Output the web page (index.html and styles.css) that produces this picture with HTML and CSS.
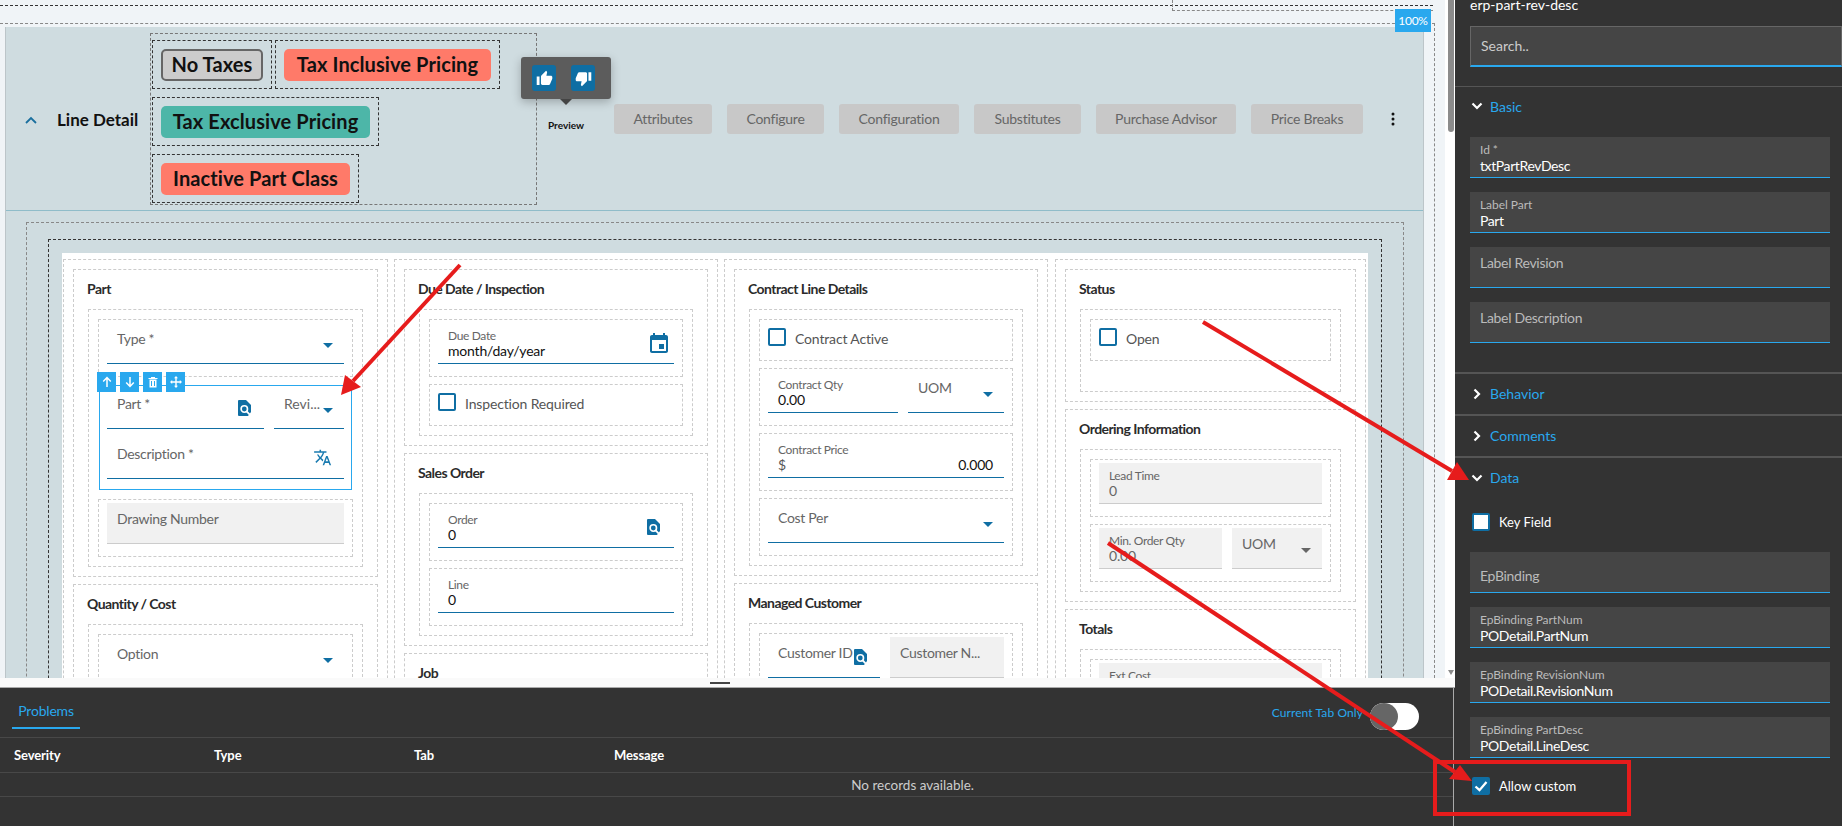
FILE: index.html
```html
<!DOCTYPE html>
<html lang="en">
<head>
<meta charset="utf-8">
<title>Line Detail designer</title>
<link rel="stylesheet" href="styles.css">
</head>
<body>
<svg class="defs" aria-hidden="true">
  <symbol id="i-search" viewBox="0 0 13 16"><path d="M0 1a1 1 0 0 1 1-1h7l5 5v10a1 1 0 0 1-1 1H1a1 1 0 0 1-1-1z" fill="#0f6ea3"/><path d="M13 12v4H10z" fill="#fff"/><circle cx="6.300" cy="9" r="3.200" fill="#0f6ea3" stroke="#fff" stroke-width="1.600"/><path d="M8.600 11.300 11.800 14.600" fill="none" stroke="#fff" stroke-width="1.800"/></symbol>
  <symbol id="i-cal" viewBox="2 0 20 22"><path d="M17 12h-5v5h5v-5zM16 1v2H8V1H6v2H5c-1.11 0-1.99.9-1.99 2L3 19c0 1.1.89 2 2 2h14c1.1 0 2-.9 2-2V5c0-1.1-.9-2-2-2h-1V1h-2zm3 18H5V8h14v11z"/></symbol>
  <symbol id="i-tr" viewBox="1 1 23 22"><path d="M12.87 15.07l-2.54-2.51.03-.03c1.74-1.94 2.98-4.17 3.71-6.53H17V4h-7V2H8v2H1v1.99h11.17C11.5 7.92 10.44 9.75 9 11.35 8.07 10.32 7.3 9.19 6.69 8h-2c.73 1.63 1.73 3.17 2.98 4.56l-5.09 5.02L4 19l5-5 3.11 3.11.76-2.04zM18.5 10h-2L12 22h2l1.12-3h4.75L21 22h2l-4.5-12zm-2.62 7l1.62-4.33L19.12 17h-3.24z"/></symbol>
  <symbol id="i-down" viewBox="0 0 12 8"><path d="M1.5 1.5 6 6l4.5-4.5" fill="none" stroke="currentColor" stroke-width="2.2"/></symbol>
  <symbol id="i-right" viewBox="0 0 8 12"><path d="M1.5 1.5 6 6l-4.5 4.5" fill="none" stroke="currentColor" stroke-width="2.2"/></symbol>
</svg>

<div class="main">
  <div class="canvas-wrap">
    <div class="canvas">
      <div class="top-line"></div>
      <div class="top-box"></div>
      <div class="zoom-badge">100%</div>
      <div class="body-dash">
        <section class="panel">
          <header class="panel-header">
            <svg class="collapse" viewBox="0 0 12 8"><path d="M1 7l5-5 5 5" fill="none" stroke="#1a6f9e" stroke-width="1.8"/></svg>
            <h1 class="panel-title">Line Detail</h1>
            <div class="chips">
              <div class="chip-box"><span class="chip chip-grey">No Taxes</span></div>
              <div class="chip-box"><span class="chip chip-red w207">Tax Inclusive Pricing</span></div>
              <div class="chip-box"><span class="chip chip-teal w209">Tax Exclusive Pricing</span></div>
              <div class="chip-box"><span class="chip chip-red w189">Inactive Part Class</span></div>
            </div>
            <div class="preview">
              <div class="vote">
                <span class="vote-btn"><svg viewBox="0 0 24 24"><path d="M1 21h4V9H1v12zm22-11c0-1.1-.9-2-2-2h-6.31l.95-4.57.03-.32c0-.41-.17-.79-.44-1.06L14.17 1 7.59 7.59C7.22 7.95 7 8.45 7 9v10c0 1.1.9 2 2 2h9c.83 0 1.54-.5 1.84-1.22l3.02-7.05c.09-.23.14-.47.14-.73v-2z"/></svg></span>
                <span class="vote-btn"><svg viewBox="0 0 24 24"><path d="M15 3H6c-.83 0-1.54.5-1.84 1.22l-3.02 7.05c-.09.23-.14.47-.14.73v2c0 1.1.9 2 2 2h6.31l-.95 4.57-.03.32c0 .41.17.79.44 1.06L9.83 23l6.59-6.59c.36-.36.58-.86.58-1.41V5c0-1.1-.9-2-2-2zm4 0v12h4V3h-4z"/></svg></span>
                <span class="vote-tip"></span>
              </div>
              <span class="preview-label">Preview</span>
            </div>
            <nav class="tabs">
              <span class="tab">Attributes</span>
              <span class="tab">Configure</span>
              <span class="tab">Configuration</span>
              <span class="tab">Substitutes</span>
              <span class="tab">Purchase Advisor</span>
              <span class="tab">Price Breaks</span>
            </nav>
            <svg class="kebab" viewBox="0 0 4 14"><circle cx="2" cy="2" r="1.5"/><circle cx="2" cy="7" r="1.5"/><circle cx="2" cy="12" r="1.5"/></svg>
          </header>

          <div class="panel-body">
            <div class="dash-a">
              <div class="dash-b">
                <div class="form">

                  <div class="col">
                    <div class="card">
                      <h2 class="card-title">Part</h2>
                      <div class="inner">
                        <div class="row">
                          <div class="field"><span class="ph">Type *</span><i class="arrow"></i></div>
                        </div>
                        <div class="selected">
                          <div class="toolbar">
                            <span class="tool"><svg viewBox="0 0 12 12"><path d="M6 11V2M2.2 5.5 6 1.6l3.8 3.9" fill="none" stroke="#fff" stroke-width="1.5"/></svg></span>
                            <span class="tool"><svg viewBox="0 0 12 12"><path d="M6 1v9M2.2 6.500 6 10.400l3.800-3.900" fill="none" stroke="#fff" stroke-width="1.500"/></svg></span>
                            <span class="tool"><svg viewBox="0 0 12 12"><path d="M1.500 2h9v1h-9zM4 1h4v1H4zM2.500 3.500h7V11.500h-7zM4 5v5h1V5zm3 0v5h1V5z" fill="#fff" fill-rule="evenodd"/></svg></span>
                            <span class="tool"><svg viewBox="0 0 12 12"><path d="M6 0 8 2.200H6.700V5.300H9.800V4L12 6 9.800 8V6.700H6.700V9.800H8L6 12 4 9.800H5.300V6.700H2.200V8L0 6 2.200 4V5.300H5.300V2.200H4z" fill="#fff"/></svg></span>
                          </div>
                          <div class="split">
                            <div class="field w157"><span class="ph">Part *</span><svg class="ic-search"><use href="#i-search"/></svg></div>
                            <div class="field fill"><span class="ph ph-rev">Revi...</span><i class="arrow"></i></div>
                          </div>
                          <div class="field"><span class="ph">Description *</span><svg class="ic-tr"><use href="#i-tr"/></svg></div>
                        </div>
                        <div class="row">
                          <div class="field off"><span class="ph">Drawing Number</span></div>
                        </div>
                      </div>
                    </div>
                    <div class="card">
                      <h2 class="card-title">Quantity / Cost</h2>
                      <div class="inner">
                        <div class="row">
                          <div class="field"><span class="ph">Option</span><i class="arrow"></i></div>
                        </div>
                      </div>
                    </div>
                  </div>

                  <div class="col">
                    <div class="card">
                      <h2 class="card-title">Due Date / Inspection</h2>
                      <div class="inner">
                        <div class="row">
                          <div class="field">
                            <div class="stack"><span class="lbl">Due Date</span><span class="val">month/day/year</span></div>
                            <svg class="ic-cal"><use href="#i-cal"/></svg>
                          </div>
                        </div>
                        <div class="row row-check"><span class="check"></span><span class="check-text">Inspection Required</span></div>
                      </div>
                    </div>
                    <div class="card">
                      <h2 class="card-title">Sales Order</h2>
                      <div class="inner">
                        <div class="row">
                          <div class="field">
                            <div class="stack"><span class="lbl">Order</span><span class="val">0</span></div>
                            <svg class="ic-search ic-search-order"><use href="#i-search"/></svg>
                          </div>
                        </div>
                        <div class="row">
                          <div class="field"><div class="stack"><span class="lbl">Line</span><span class="val">0</span></div></div>
                        </div>
                      </div>
                    </div>
                    <div class="card">
                      <h2 class="card-title">Job</h2>
                    </div>
                  </div>

                  <div class="col">
                    <div class="card">
                      <h2 class="card-title">Contract Line Details</h2>
                      <div class="inner">
                        <div class="row row-check"><span class="check"></span><span class="check-text">Contract Active</span></div>
                        <div class="row">
                          <div class="split">
                            <div class="field w130"><div class="stack"><span class="lbl">Contract Qty</span><span class="val">0.00</span></div></div>
                            <div class="field fill"><span class="ph">UOM</span><i class="arrow"></i></div>
                          </div>
                        </div>
                        <div class="row">
                          <div class="field">
                            <div class="stack"><span class="lbl">Contract Price</span>
                              <span class="val val-money"><span class="cur">$</span><span>0.000</span></span>
                            </div>
                          </div>
                        </div>
                        <div class="row">
                          <div class="field"><span class="ph">Cost Per</span><i class="arrow"></i></div>
                        </div>
                      </div>
                    </div>
                    <div class="card">
                      <h2 class="card-title">Managed Customer</h2>
                      <div class="inner">
                        <div class="row">
                          <div class="split">
                            <div class="field w112"><span class="ph">Customer ID</span><svg class="ic-search"><use href="#i-search"/></svg></div>
                            <div class="field fill off"><span class="ph ph-name">Customer N...</span></div>
                          </div>
                        </div>
                      </div>
                    </div>
                  </div>

                  <div class="col col-last">
                    <div class="card">
                      <h2 class="card-title">Status</h2>
                      <div class="inner inner-tall">
                        <div class="row row-check"><span class="check"></span><span class="check-text">Open</span></div>
                      </div>
                    </div>
                    <div class="card">
                      <h2 class="card-title">Ordering Information</h2>
                      <div class="inner">
                        <div class="row">
                          <div class="field off"><div class="stack"><span class="lbl">Lead Time</span><span class="val">0</span></div></div>
                        </div>
                        <div class="row">
                          <div class="split">
                            <div class="field off w123"><div class="stack"><span class="lbl">Min. Order Qty</span><span class="val">0.00</span></div></div>
                            <div class="field off fill"><span class="ph">UOM</span><i class="arrow"></i></div>
                          </div>
                        </div>
                      </div>
                    </div>
                    <div class="card">
                      <h2 class="card-title">Totals</h2>
                      <div class="inner">
                        <div class="row">
                          <div class="field off"><div class="stack"><span class="lbl">Ext Cost</span><span class="val">0.00</span></div></div>
                        </div>
                      </div>
                    </div>
                  </div>

                </div>
              </div>
            </div>
          </div>
        </section>
      </div>
    </div>
    <div class="gutter"><span class="thumb"></span><i class="gutter-arrow"></i></div>
  </div>
  <div class="splitter"><span class="handle"></span></div>

  <section class="problems">
    <div class="problems-top">
      <span class="problems-tab">Problems</span>
      <span class="current">Current Tab Only</span>
      <span class="toggle"><span class="knob"></span></span>
    </div>
    <div class="grid-head">
      <span>Severity</span><span>Type</span><span>Tab</span><span>Message</span>
    </div>
    <div class="grid-empty">No records available.</div>
  </section>
</div>

<aside class="props">
  <div class="props-title">erp-part-rev-desc</div>
  <div class="search-wrap"><div class="search">Search..</div></div>

  <div class="sec-head sec-head-first"><svg class="chev-d"><use href="#i-down"/></svg><span>Basic</span></div>
  <div class="sec-body">
    <div class="dfield"><span class="dlbl">Id *</span><span class="dval">txtPartRevDesc</span></div>
    <div class="dfield"><span class="dlbl">Label Part</span><span class="dval">Part</span></div>
    <div class="dfield"><span class="dph">Label Revision</span></div>
    <div class="dfield"><span class="dph">Label Description</span></div>
  </div>
  <div class="sec-head sec-closed"><svg class="chev-r"><use href="#i-right"/></svg><span>Behavior</span></div>
  <div class="sec-head sec-closed"><svg class="chev-r"><use href="#i-right"/></svg><span>Comments</span></div>
  <div class="sec-head sec-data"><svg class="chev-d"><use href="#i-down"/></svg><span>Data</span></div>
  <div class="data-body">
    <label class="dcheck"><span class="box box-white"></span><span>Key Field</span></label>
    <div class="dfield"><span class="dph dph-low">EpBinding</span></div>
    <div class="dfield"><span class="dlbl">EpBinding PartNum</span><span class="dval">PODetail.PartNum</span></div>
    <div class="dfield"><span class="dlbl">EpBinding RevisionNum</span><span class="dval">PODetail.RevisionNum</span></div>
    <div class="dfield"><span class="dlbl">EpBinding PartDesc</span><span class="dval">PODetail.LineDesc</span></div>
    <label class="dcheck dcheck-last"><span class="box box-on"><svg viewBox="0 0 18 18"><path d="M3.500 9.500 7.500 13.200 14.500 5" fill="none" stroke="#fff" stroke-width="2.300"/></svg></span><span>Allow custom</span></label>
  </div>
</aside>

<svg class="marks" viewBox="0 0 1842 826" aria-hidden="true">
  <g stroke="#e61c1c" stroke-width="4" fill="none">
    <path d="M460 265 353 381"/>
    <path d="M1203 322 1452 471"/>
    <path d="M1108 543 1455 772"/>
    <rect x="1435" y="762" width="194" height="52"/>
  </g>
  <g fill="#e61c1c">
    <path d="M341 395 345 375 361 387z"/>
    <path d="M1469 480 1447 480 1457 462z"/>
    <path d="M1472 781 1449 779 1460 765z"/>
  </g>
</svg>
</body>
</html>
```
FILE: styles.css
```css
* { box-sizing: border-box; }
html, body { margin: 0; height: 100%; }
body {
  width: 1842px;
  height: 826px;
  overflow: hidden;
  display: flex;
  position: relative;
  background: #333;
  font-family: "Lato", "Noto Sans", sans-serif;
  font-size: 14px;
  color: #222;
}
h1, h2 { margin: 0; }
i { display: block; }
.defs { position: absolute; width: 0; height: 0; }

.main { width: 1455px; display: flex; flex-direction: column; flex: none; }
.canvas-wrap { display: flex; height: 678px; flex: none; }
.canvas { width: 1445px; background: #f0f4f7; overflow: hidden; position: relative; }
.gutter { width: 10px; background: #fff; display: flex; flex-direction: column; align-items: center; padding: 0 0 3px 2px; }
.thumb { width: 6px; height: 132px; background: #8b8b8b; border-radius: 0 0 3px 3px; }
.gutter-arrow { margin-top: auto; border-left: 3px solid transparent; border-right: 3px solid transparent; border-top: 5px solid #8b8b8b; }

.top-line { margin-top: 5px; height: 18px; width: 1433px; border-top: 1px dashed #333; }
.top-box { position: absolute; left: 1172px; top: 0; width: 261px; height: 11px; border-left: 1px dashed #888; border-bottom: 1px dashed #888; }
.zoom-badge { position: absolute; left: 1395px; top: 9px; width: 36px; height: 23px; background: #29a8ee; color: #fff; font-size: 12px; line-height: 23px; text-align: center; letter-spacing: -.3px; z-index: 3; }
.body-dash { width: 1435px; height: 660px; border-top: 1px dashed #888; border-right: 1px dashed #888; padding: 3px 0 0 5px; }

.panel { width: 1419px; height: 660px; background: #cfdce0; border-left: 1px solid #bcc5c9; border-right: 1px solid #bcc5c9; }
.panel-header { height: 184px; border-bottom: 1px solid #8fbcc9; display: flex; align-items: flex-start; padding-left: 19px; }
.collapse { width: 12px; height: 8px; margin-top: 89px; flex: none; }
.panel-title { font-size: 17px; font-weight: 700; line-height: 22px; color: #111; margin: 82px 0 0 20px; width: 93px; flex: none; white-space: nowrap; }

.chips { width: 387px; height: 172px; margin-top: 6px; border: 1px dashed #777; padding: 6px 1px; display: flex; flex-wrap: wrap; align-content: flex-start; gap: 8px 3px; flex: none; }
.chip-box { height: 49px; border: 1px dashed #333; padding: 8px; }
.chip { display: block; height: 32px; line-height: 30px; border-radius: 5px; font-size: 20px; font-weight: 700; text-align: center; color: #111; letter-spacing: .1px; white-space: nowrap; }
.chip-grey { width: 102px; background: #ccc; border: 2px solid #666; line-height: 27px; }
.chip-red { background: #ff7a69; }
.chip-teal { background: #4db6a8; }
.w207 { width: 207px; }
.w209 { width: 209px; }
.w189 { width: 189px; }

.preview { width: 58px; flex: none; position: relative; text-align: center; }
.preview-label { display: block; margin-top: 91px; font-size: 10px; font-weight: 700; line-height: 14px; color: #111; }
.vote { position: absolute; left: -16px; top: 30px; width: 90px; height: 42px; background: #5c5c5c; border-radius: 3px; box-shadow: 0 3px 10px rgba(0,0,0,.25); display: flex; gap: 15px; padding: 8px 0 0 11px; z-index: 2; }
.vote-btn { width: 24px; height: 26px; background: #0f6ea3; border-radius: 3px; display: flex; align-items: center; justify-content: center; }
.vote-btn svg { width: 17px; height: 17px; fill: #fff; }
.vote-tip { position: absolute; left: 39px; top: 42px; border-left: 6px solid transparent; border-right: 6px solid transparent; border-top: 6px solid #444; }

.tabs { display: grid; grid-template-columns: 98px 97px 120px 107px 140px 112px; column-gap: 15px; margin: 77px 0 0 19px; flex: none; }
.tab { height: 30px; line-height: 30px; text-align: center; background: #c8c8c8; border-radius: 3px; color: #666; font-size: 14px; letter-spacing: -.25px; white-space: nowrap; }
.kebab { width: 4px; height: 14px; margin: 85px 0 0 28px; fill: #111; flex: none; }

.panel-body { padding: 11px 19px 0 20px; }
.dash-a { border: 1px dashed #888; padding: 16px 21px 0; height: 600px; }
.dash-b { border: 1px dashed #333; padding: 13px 13px 0; height: 600px; }
.form { background: #fff; padding: 6px 0 0 1px; height: 600px; display: grid; grid-template-columns: 325px 324px 324px 312px; column-gap: 6px; align-items: start; }
.col { border: 1px dashed #ccc; padding: 9px 9px 0; height: 600px; display: flex; flex-direction: column; gap: 7px; }
.col-last { margin-left: 1px; }
.card { border: 1px dashed #ccc; padding: 0 14px 9px; flex: none; }
.card-title { height: 39px; line-height: 37px; margin-left: -1px; font-size: 14px; font-weight: 700; color: #2b2b2b; letter-spacing: -.55px; }
.inner { border: 1px dashed #ccc; padding: 9px; display: flex; flex-direction: column; gap: 7px; }
.inner-tall { min-height: 83px; }
.row { border: 1px dashed #ccc; padding: 3px 8px 12px; height: 58px; }
.row-check { height: 42px; padding: 8px; display: flex; align-items: flex-start; gap: 9px; }
.check { width: 18px; height: 18px; border: 2px solid #0f6ea3; border-radius: 2px; flex: none; }
.check-text { color: #555; line-height: 18px; margin-top: 2px; letter-spacing: -.15px; }

.field { height: 41px; border-bottom: 1px solid #0f6ea3; display: flex; align-items: flex-start; padding-left: 10px; min-width: 0; }
.field.off { background: #f1f1f1; border-bottom-color: #ccc; }
.split { display: flex; gap: 10px; }
.fill { flex: 1; }
.w157 { width: 157px; flex: none; }
.w130 { width: 130px; flex: none; }
.w123 { width: 123px; flex: none; }
.w112 { width: 112px; flex: none; }
.ph { flex: 1; min-width: 0; margin-top: 6px; line-height: 20px; color: #666; white-space: nowrap; letter-spacing: -.3px; }
.ph-rev { letter-spacing: 0; }
.stack { flex: 1; min-width: 0; display: flex; flex-direction: column; margin-top: 5px; }
.lbl { font-size: 12px; line-height: 15px; color: #666; white-space: nowrap; letter-spacing: -.35px; }
.val { line-height: 16px; color: #111; white-space: nowrap; letter-spacing: -.2px; }
.off .val { color: #666; }
.val-money { display: flex; justify-content: space-between; padding-right: 11px; }
.cur { color: #555; }
.arrow { flex: none; margin: 20px 11px 0 0; position: relative; border-left: 5px solid transparent; border-right: 5px solid transparent; border-top: 5px solid #0f6ea3; }
.off .arrow { border-top-color: #666; }
.ic-search { width: 13px; height: 16px; margin: 12px 13px 0 0; flex: none; }
.ic-search-order { margin-right: 14px; }
.ic-tr { width: 18px; height: 17px; margin: 11px 12px 0 0; fill: #1a7bb0; flex: none; }
.ic-cal { width: 20px; height: 22px; margin: 9px 5px 0 0; fill: #0f6ea3; flex: none; }

.selected { position: relative; border: 1px solid #29a8ee; margin: 1px 1px 2px; padding: 2px 7px 10px; display: flex; flex-direction: column; gap: 9px; }
.toolbar { position: absolute; left: -3px; top: -14px; display: flex; gap: 4px; z-index: 2; }
.tool { width: 19px; height: 20px; background: #29a8ee; display: flex; align-items: center; justify-content: center; }
.tool svg { width: 12px; height: 12px; }

.splitter { height: 10px; background: #fafafa; border-bottom: 1px solid #aaa; display: flex; padding: 4px 0 0 710px; flex: none; }
.handle { width: 20px; height: 2px; background: #444; }

.problems { flex: 1; width: 1454px; background: #333; border-right: 1px solid #aaa; color: #fff; }
.problems-top { height: 50px; border-bottom: 1px solid #484848; display: flex; align-items: flex-start; padding: 0 34px 0 12px; }
.problems-tab { width: 68px; height: 41px; border-bottom: 2px solid #29a8ee; padding-top: 14px; line-height: 18px; color: #29a8ee; text-align: center; letter-spacing: -.2px; }
.current { margin: 16px 7px 0 auto; font-size: 12px; line-height: 18px; color: #29a8ee; letter-spacing: .1px; }
.toggle { width: 49px; height: 27px; margin-top: 15px; background: #fff; border-radius: 14px; }
.knob { display: block; width: 28px; height: 27px; border-radius: 50%; background: #666; }
.grid-head { height: 35px; border-bottom: 1px solid #484848; display: grid; grid-template-columns: repeat(4, 200px); padding-left: 14px; line-height: 35px; font-size: 13px; font-weight: 700; letter-spacing: -.1px; }
.grid-empty { height: 24px; border-bottom: 1px solid #484848; text-align: right; padding-right: 479px; line-height: 24px; font-size: 13.5px; color: #ccc; }

.props { width: 387px; height: 826px; background: #333; flex: none; color: #fff; display: flex; flex-direction: column; }
.props-title { height: 26px; line-height: 10px; padding-left: 15px; font-size: 14px; }
.search-wrap { height: 61px; padding-left: 15px; border-bottom: 1px solid #555; }
.search { width: 372px; height: 41px; background: #454545; border: 1px solid #666; border-bottom: 2px solid #29a8ee; padding-left: 10px; line-height: 38px; color: #ccc; }
.sec-head { display: flex; align-items: center; color: #29a8ee; padding-left: 16px; font-size: 14px; flex: none; }
.sec-closed span, .sec-data span { margin-top: -2px; }
.sec-head-first { height: 38px; }
.sec-closed { height: 42px; border-bottom: 2px solid #555; }
.sec-data { height: 40px; }
.chev-d { width: 12px; height: 8px; color: #fff; margin-right: 7px; flex: none; }
.chev-r { width: 8px; height: 12px; color: #fff; margin: 0 9px 0 2px; flex: none; }
.sec-body { padding: 12px 0 29px 15px; border-bottom: 2px solid #555; display: flex; flex-direction: column; gap: 14px; flex: none; height: 249px; }
.dfield { width: 360px; height: 41px; background: #454545; border-bottom: 1px solid #29a8ee; padding-left: 10px; display: flex; flex-direction: column; flex: none; }
.dlbl { margin-top: 5px; font-size: 12px; line-height: 15px; color: #bbb; white-space: nowrap; letter-spacing: -.05px; }
.dval { line-height: 17px; color: #fff; white-space: nowrap; letter-spacing: -.4px; }
.dph { margin-top: 6px; line-height: 20px; color: #bbb; letter-spacing: -.3px; }
.dph-low { margin-top: 14px; }
.data-body { padding: 15px 0 0 15px; display: flex; flex-direction: column; gap: 14px; }
.dcheck { height: 18px; display: flex; align-items: center; gap: 9px; padding-left: 2px; font-size: 13px; margin-bottom: 7px; }
.dcheck-last { margin: 5px 0 0; }
.box { width: 18px; height: 18px; border-radius: 2px; flex: none; display: block; }
.box svg { display: block; width: 18px; height: 18px; }
.box-white { background: #fff; border: 2px solid #0f6ea3; }
.box-on { background: #0f6ea3; }

.marks { position: absolute; left: 0; top: 0; width: 1842px; height: 826px; pointer-events: none; z-index: 10; }
```
